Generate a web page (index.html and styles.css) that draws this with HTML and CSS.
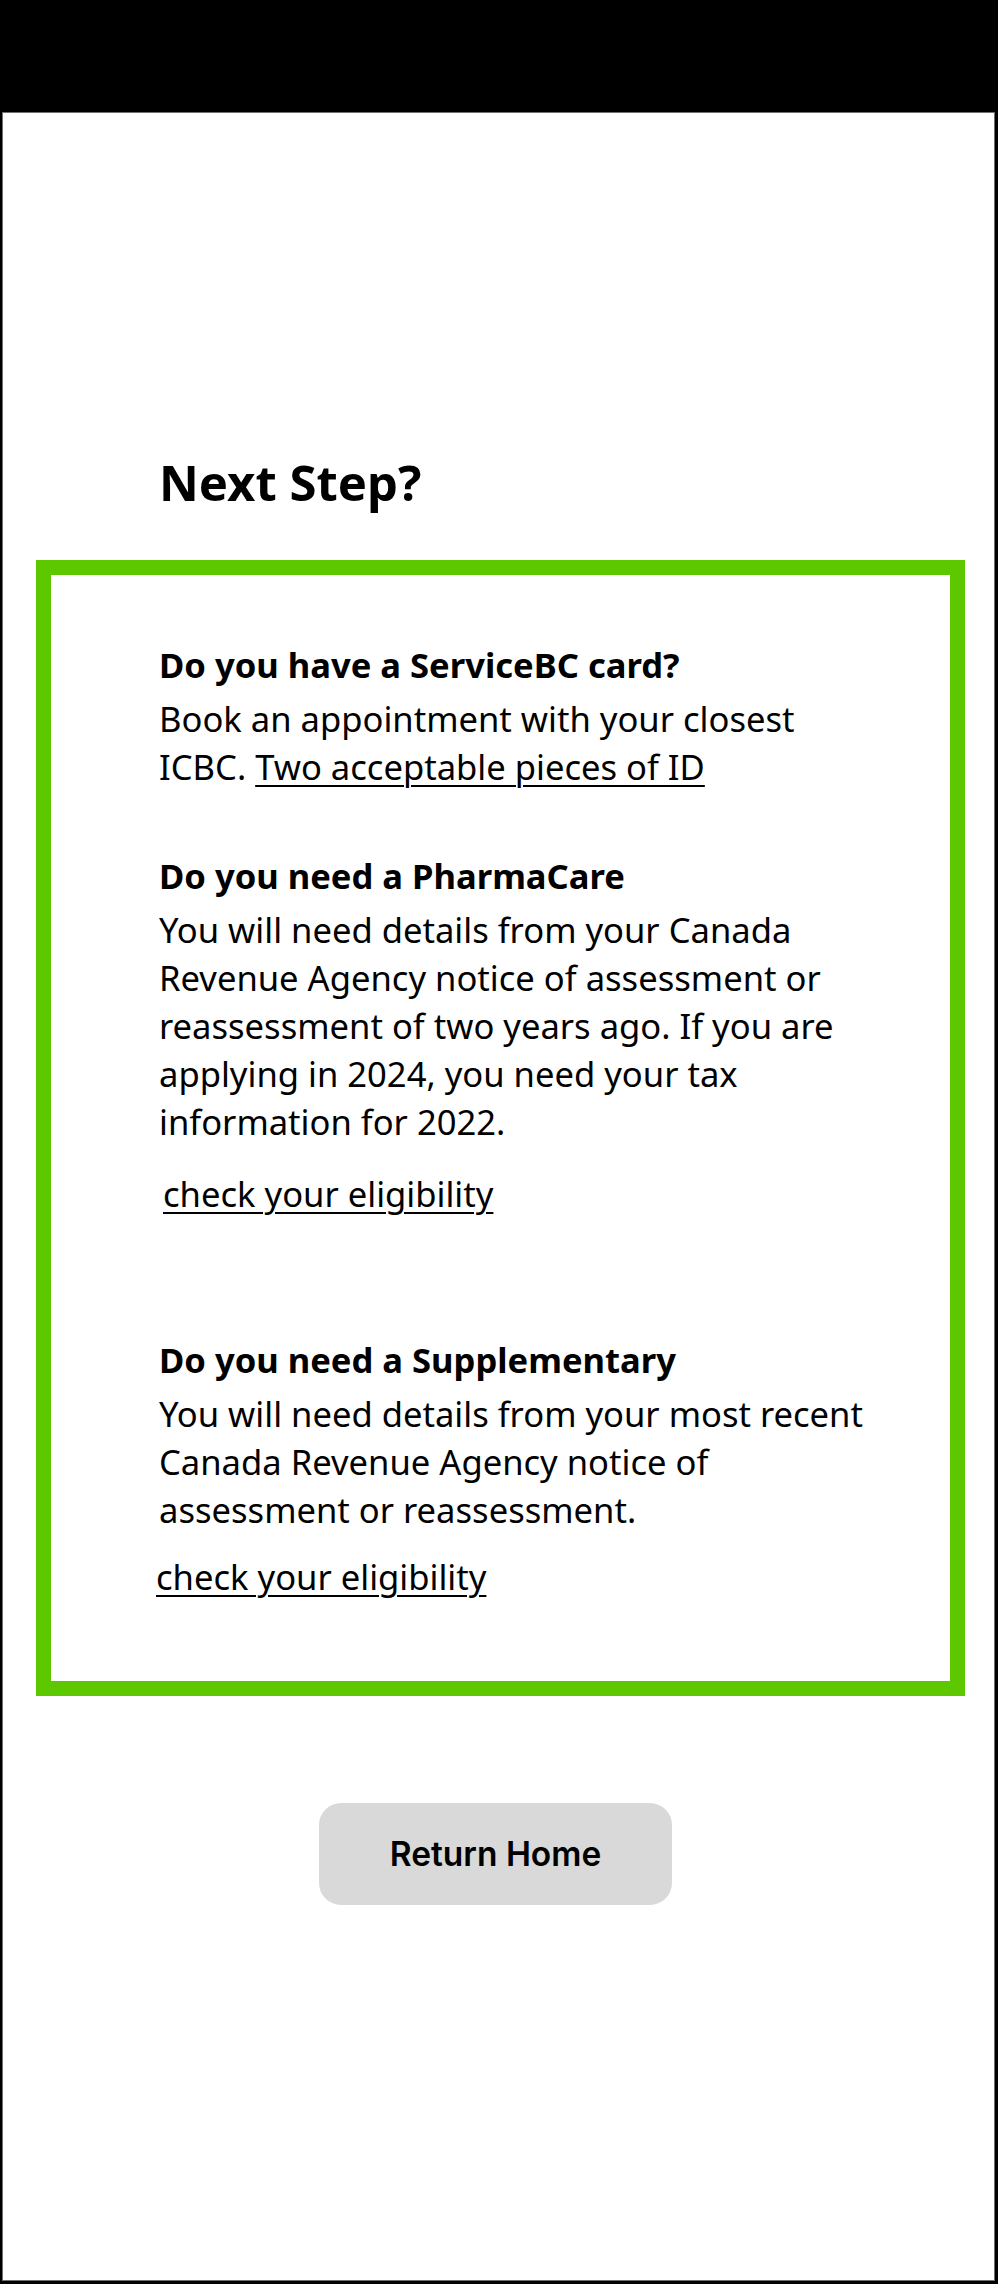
FILE: index.html
```html
<!DOCTYPE html>
<html lang="en">
<head>
<meta charset="utf-8">
<title>Next Step?</title>
<link rel="stylesheet" href="styles.css">
</head>
<body>
<main class="frame">
  <h1 class="title">Next Step?</h1>
  <section class="steps">
    <div class="step step-first">
      <h2 class="step-heading">Do you have a ServiceBC card?</h2>
      <p class="step-text">Book an appointment with your closest ICBC. <a class="link" href="#">Two acceptable pieces of ID</a></p>
    </div>
    <div class="step step-second">
      <h2 class="step-heading">Do you need a PharmaCare</h2>
      <p class="step-text">You will need details from your Canada Revenue Agency notice of assessment or reassessment of two years ago. If you are applying in 2024, you need your tax information for 2022.</p>
      <a class="link check check-a" href="#">check your eligibility</a>
    </div>
    <div class="step step-third">
      <h2 class="step-heading">Do you need a Supplementary</h2>
      <p class="step-text">You will need details from your most recent Canada Revenue Agency notice of assessment or reassessment.</p>
      <a class="link check check-b" href="#">check your eligibility</a>
    </div>
  </section>
  <button class="home-btn" type="button">Return Home</button>
</main>
</body>
</html>
```
FILE: styles.css
```css
html, body {
  margin: 0;
  padding: 0;
}

body {
  background: #000;
  font-family: "Noto Sans", "Open Sans", sans-serif;
  color: #000;
}

.frame {
  box-sizing: border-box;
  height: 2169px;
  margin: 112px 3px 3px 2px;
  border: 1px solid #707070;
  background: #fff;
  overflow: hidden;
}

.title {
  margin: 339px 0 0 156px;
  font-size: 49px;
  line-height: 60px;
  font-weight: 700;
}

.steps {
  box-sizing: border-box;
  width: 929px;
  margin: 48px 0 0 33px;
  border: 15px solid #5dc800;
  padding: 66px 60px 80px 108px;
}

.step-heading {
  margin: 0 0 6px;
  font-size: 34.6px;
  line-height: 48px;
  font-weight: 700;
}

.step-text {
  margin: 0;
  font-size: 34.6px;
  line-height: 48px;
  font-weight: 400;
}

.step-second {
  margin-top: 61px;
}

.step-third {
  margin-top: 118px;
}

.link {
  color: #000;
  text-decoration: underline;
  text-decoration-thickness: 2px;
  text-underline-offset: 5px;
}

.check {
  display: block;
  width: max-content;
  font-size: 34.6px;
  line-height: 48px;
}

.check-a {
  margin: 24px 0 0 4px;
}

.check-b {
  margin: 19px 0 0 -3px;
}

.home-btn {
  display: block;
  box-sizing: border-box;
  width: 353px;
  height: 102px;
  margin: 107px 0 0 316px;
  border: none;
  border-radius: 22px;
  background: #d9d9d9;
  font-family: Inter, "Liberation Sans", sans-serif;
  font-size: 33.5px;
  font-weight: 600;
  color: #000;
  padding: 0;
}
```
